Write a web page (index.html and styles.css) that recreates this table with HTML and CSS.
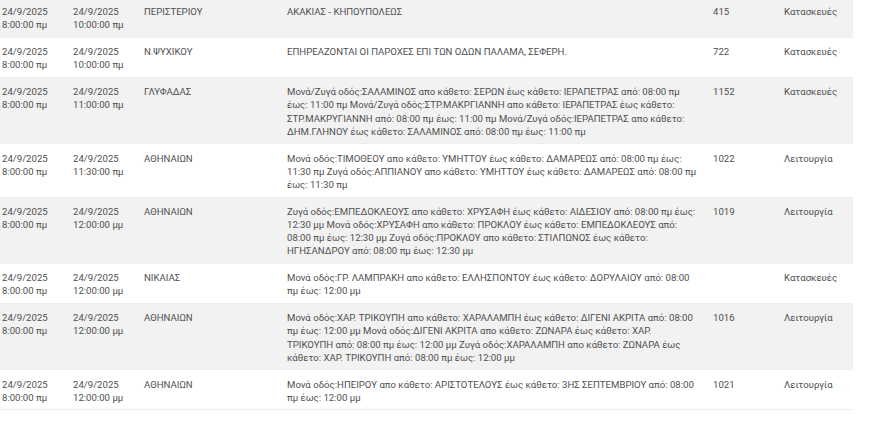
FILE: index.html
```html
<!DOCTYPE html>
<html lang="el">
<head>
<meta charset="utf-8">
<link rel="stylesheet" href="styles.css">
</head>
<body>
<table class="outages">
  <colgroup>
    <col class="c-sm"><col class="c-sm"><col class="c-md"><col class="c-lg"><col class="c-sm"><col class="c-sm">
  </colgroup>
  <tbody>
    <tr>
      <td>24/9/2025 8:00:00 πμ</td>
      <td>24/9/2025 10:00:00 πμ</td>
      <td>ΠΕΡΙΣΤΕΡΙΟΥ</td>
      <td>ΑΚΑΚΙΑΣ - ΚΗΠΟΥΠΟΛΕΩΣ</td>
      <td>415</td>
      <td>Κατασκευές</td>
    </tr>
    <tr>
      <td>24/9/2025 8:00:00 πμ</td>
      <td>24/9/2025 10:00:00 πμ</td>
      <td>Ν.ΨΥΧΙΚΟΥ</td>
      <td>ΕΠΗΡΕΑΖΟΝΤΑΙ ΟΙ ΠΑΡΟΧΕΣ ΕΠΙ ΤΩΝ ΟΔΩΝ ΠΑΛΑΜΑ, ΣΕΦΕΡΗ.</td>
      <td>722</td>
      <td>Κατασκευές</td>
    </tr>
    <tr>
      <td>24/9/2025 8:00:00 πμ</td>
      <td>24/9/2025 11:00:00 πμ</td>
      <td>ΓΛΥΦΑΔΑΣ</td>
      <td>Μονά/Ζυγά οδός:ΣΑΛΑΜΙΝΟΣ απο κάθετο: ΣΕΡΩΝ έως κάθετο: ΙΕΡΑΠΕΤΡΑΣ από: 08:00 πμ έως: 11:00 πμ Μονά/Ζυγά οδός:ΣΤΡ.ΜΑΚΡΓΙΑΝΝΗ απο κάθετο: ΙΕΡΑΠΕΤΡΑΣ έως κάθετο: ΣΤΡ.ΜΑΚΡΥΓΙΑΝΝΗ από: 08:00 πμ έως: 11:00 πμ Μονά/Ζυγά οδός:ΙΕΡΑΠΕΤΡΑΣ απο κάθετο: ΔΗΜ.ΓΛΗΝΟΥ έως κάθετο: ΣΑΛΑΜΙΝΟΣ από: 08:00 πμ έως: 11:00 πμ</td>
      <td>1152</td>
      <td>Κατασκευές</td>
    </tr>
    <tr>
      <td>24/9/2025 8:00:00 πμ</td>
      <td>24/9/2025 11:30:00 πμ</td>
      <td>ΑΘΗΝΑΙΩΝ</td>
      <td>Μονά οδός:ΤΙΜΟΘΕΟΥ απο κάθετο: ΥΜΗΤΤΟΥ έως κάθετο: ΔΑΜΑΡΕΩΣ από: 08:00 πμ έως: 11:30 πμ Ζυγά οδός:ΑΠΠΙΑΝΟΥ απο κάθετο: ΥΜΗΤΤΟΥ έως κάθετο: ΔΑΜΑΡΕΩΣ από: 08:00 πμ έως: 11:30 πμ</td>
      <td>1022</td>
      <td>Λειτουργία</td>
    </tr>
    <tr>
      <td>24/9/2025 8:00:00 πμ</td>
      <td>24/9/2025 12:00:00 μμ</td>
      <td>ΑΘΗΝΑΙΩΝ</td>
      <td>Ζυγά οδός:ΕΜΠΕΔΟΚΛΕΟΥΣ απο κάθετο: ΧΡΥΣΑΦΗ έως κάθετο: ΑΙΔΕΣΙΟΥ από: 08:00 πμ έως: 12:30 μμ Μονά οδός:ΧΡΥΣΑΦΗ απο κάθετο: ΠΡΟΚΛΟΥ έως κάθετο: ΕΜΠΕΔΟΚΛΕΟΥΣ από: 08:00 πμ έως: 12:30 μμ Ζυγά οδός:ΠΡΟΚΛΟΥ απο κάθετο: ΣΤΙΛΠΩΝΟΣ έως κάθετο: ΗΓΗΣΑΝΔΡΟΥ από: 08:00 πμ έως: 12:30 μμ</td>
      <td>1019</td>
      <td>Λειτουργία</td>
    </tr>
    <tr>
      <td>24/9/2025 8:00:00 πμ</td>
      <td>24/9/2025 12:00:00 μμ</td>
      <td>ΝΙΚΑΙΑΣ</td>
      <td>Μονά οδός:ΓΡ. ΛΑΜΠΡΑΚΗ απο κάθετο: ΕΛΛΗΣΠΟΝΤΟΥ έως κάθετο: ΔΟΡΥΛΑΙΟΥ από: 08:00 πμ έως: 12:00 μμ</td>
      <td></td>
      <td>Κατασκευές</td>
    </tr>
    <tr>
      <td>24/9/2025 8:00:00 πμ</td>
      <td>24/9/2025 12:00:00 μμ</td>
      <td>ΑΘΗΝΑΙΩΝ</td>
      <td>Μονά οδός:ΧΑΡ. ΤΡΙΚΟΥΠΗ απο κάθετο: ΧΑΡΑΛΑΜΠΗ έως κάθετο: ΔΙΓΕΝΙ ΑΚΡΙΤΑ από: 08:00 πμ έως: 12:00 μμ Μονά οδός:ΔΙΓΕΝΙ ΑΚΡΙΤΑ απο κάθετο: ΖΩΝΑΡΑ έως κάθετο: ΧΑΡ. ΤΡΙΚΟΥΠΗ από: 08:00 πμ έως: 12:00 μμ Ζυγά οδός:ΧΑΡΑΛΑΜΠΗ απο κάθετο: ΖΩΝΑΡΑ έως κάθετο: ΧΑΡ. ΤΡΙΚΟΥΠΗ από: 08:00 πμ έως: 12:00 μμ</td>
      <td>1016</td>
      <td>Λειτουργία</td>
    </tr>
    <tr>
      <td>24/9/2025 8:00:00 πμ</td>
      <td>24/9/2025 12:00:00 μμ</td>
      <td>ΑΘΗΝΑΙΩΝ</td>
      <td>Μονά οδός:ΗΠΕΙΡΟΥ απο κάθετο: ΑΡΙΣΤΟΤΕΛΟΥΣ έως κάθετο: 3ΗΣ ΣΕΠΤΕΜΒΡΙΟΥ από: 08:00 πμ έως: 12:00 μμ</td>
      <td>1021</td>
      <td>Λειτουργία</td>
    </tr>
  </tbody>
</table>
</body>
</html>
```
FILE: styles.css
```css
html, body {
  margin: 0;
  padding: 0;
  background: #ffffff;
}

body {
  font-family: Roboto, "Noto Sans", "Liberation Sans", sans-serif;
  font-size: 9.6px;
  line-height: 13.2px;
  color: #4f4f4f;
}

.outages {
  width: 852px;
  margin-top: -2px;
  border-collapse: collapse;
  table-layout: fixed;
}

.c-sm { width: 71px; }
.c-md { width: 143px; }
.c-lg { width: 426px; }

.outages td {
  vertical-align: top;
  text-align: left;
  padding: 7.2px 12px 5.4px 2px;
  border-bottom: 1px solid #eeeeee;
}

.outages tr:nth-child(odd) td {
  background: #f2f2f2;
}
```
